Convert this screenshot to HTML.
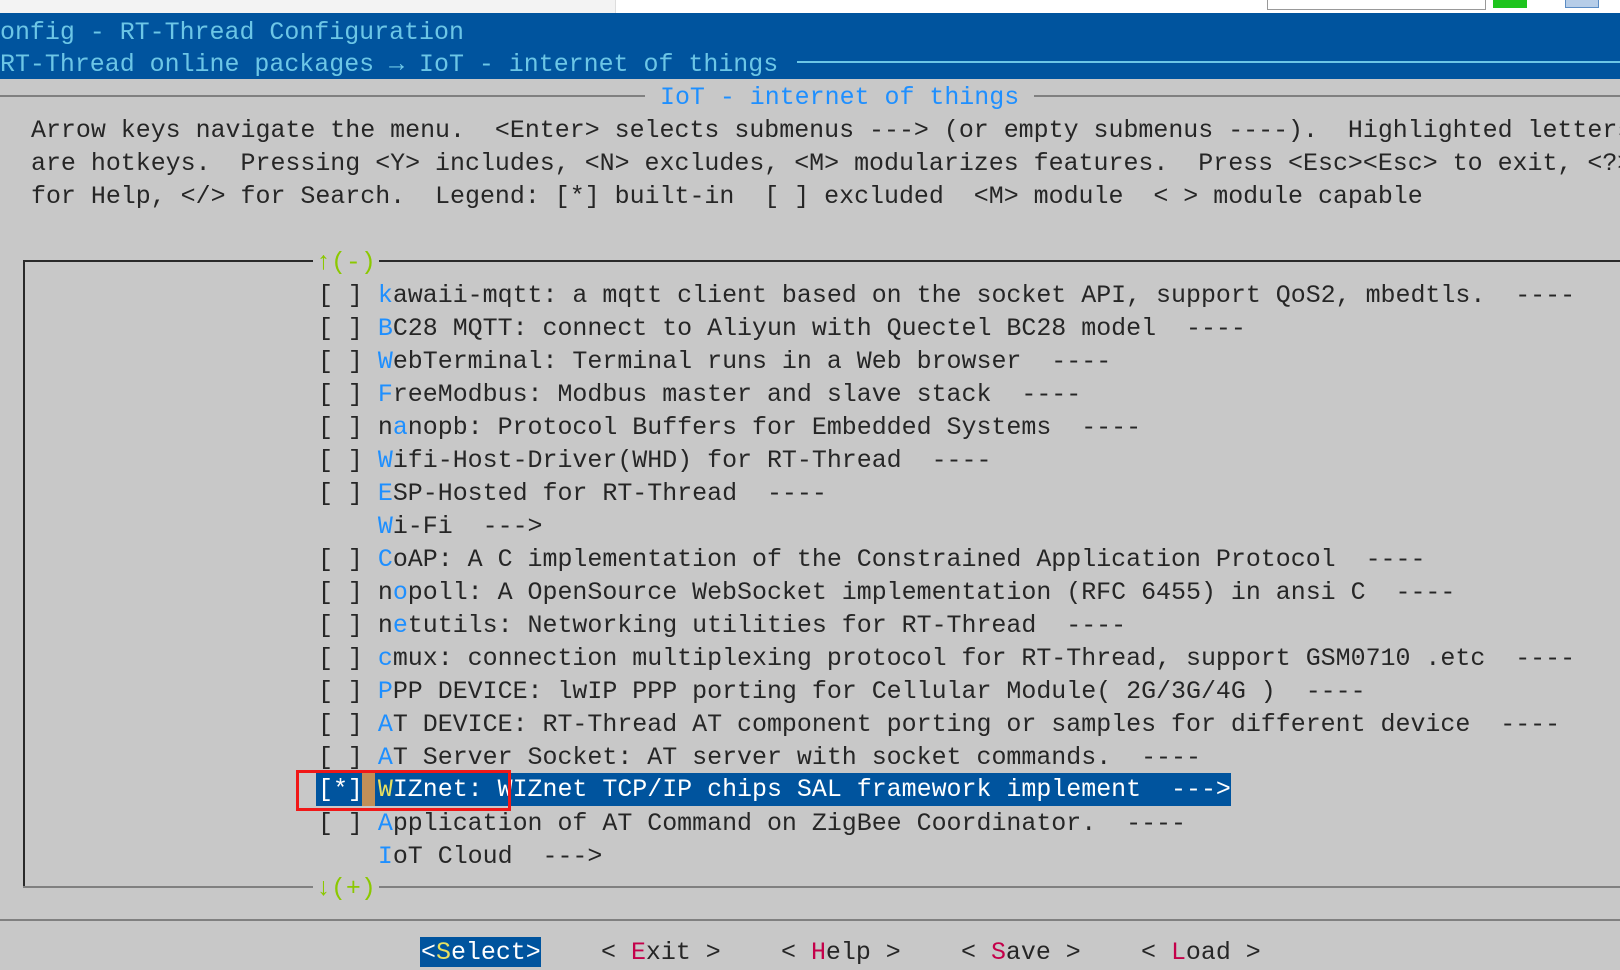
<!DOCTYPE html>
<html><head><meta charset="utf-8"><style>
*{margin:0;padding:0;box-sizing:border-box}
body{width:1620px;height:960px;overflow:hidden;background:#c8c8c8;position:relative;font-family:"Liberation Mono",monospace;font-size:24.95px;color:#262626}
.t{position:absolute;white-space:pre;line-height:33px;height:33px}
.b{color:#1e8fff}
.hdr{color:#6cc6e6}
.r{color:#c4004a}
</style></head><body>
<div style="position:absolute;left:0;top:0;width:1620px;height:13px;background:#fff"></div>
<div style="position:absolute;left:0;top:0;width:616px;height:13px;background:#f3f3f3;border-right:1px solid #ddd"></div>
<div style="position:absolute;left:1267px;top:0;width:219px;height:10px;background:#fff;border:1px solid #999;border-top:none"></div>
<div style="position:absolute;left:1493px;top:0;width:34px;height:8px;background:#1ec41e"></div>
<div style="position:absolute;left:1565px;top:0;width:34px;height:8px;background:#b6cde8;border:1px solid #5b8cc4;border-top:none"></div>
<div style="position:absolute;left:0;top:13px;width:1620px;height:66px;background:#00549e"></div>
<div class="t hdr" style="left:0;top:17px">onfig - RT-Thread Configuration</div>
<div class="t hdr" style="left:0;top:49px">RT-Thread online packages → IoT - internet of things</div>
<div style="position:absolute;left:797px;top:61px;width:823px;height:2px;background:#6cc6e6"></div>
<div style="position:absolute;left:0;top:95px;width:1620px;height:2px;background:#808080"></div>
<div class="t b" style="left:645px;top:82px;background:#c8c8c8;padding:0 15px">IoT - internet of things</div>
<div class="t" style="left:31px;top:115px">Arrow keys navigate the menu.  &lt;Enter&gt; selects submenus ---&gt; (or empty submenus ----).  Highlighted letters</div>
<div class="t" style="left:31px;top:148px">are hotkeys.  Pressing &lt;Y&gt; includes, &lt;N&gt; excludes, &lt;M&gt; modularizes features.  Press &lt;Esc&gt;&lt;Esc&gt; to exit, &lt;?&gt;</div>
<div class="t" style="left:31px;top:181px">for Help, &lt;/&gt; for Search.  Legend: [*] built-in  [ ] excluded  &lt;M&gt; module  &lt; &gt; module capable</div>
<div style="position:absolute;left:23px;top:260px;width:1597px;height:628px;border:2px solid #2a2a2a;border-right:none"></div>
<div style="position:absolute;left:23px;top:886px;width:1597px;height:2px;background:#808080"></div>
<div class="t" style="left:313px;top:247px;color:#8bc800;background:#c8c8c8;padding:0 3px">↑(-)</div>
<div class="t" style="left:313px;top:873px;color:#8bc800;background:#c8c8c8;padding:0 3px">↓(+)</div>
<div class="t" style="left:318px;top:280px">[ ] <span class="b">k</span>awaii-mqtt: a mqtt client based on the socket API, support QoS2, mbedtls.  ----</div>
<div class="t" style="left:318px;top:313px">[ ] <span class="b">B</span>C28 MQTT: connect to Aliyun with Quectel BC28 model  ----</div>
<div class="t" style="left:318px;top:346px">[ ] <span class="b">W</span>ebTerminal: Terminal runs in a Web browser  ----</div>
<div class="t" style="left:318px;top:379px">[ ] <span class="b">F</span>reeModbus: Modbus master and slave stack  ----</div>
<div class="t" style="left:318px;top:412px">[ ] n<span class="b">a</span>nopb: Protocol Buffers for Embedded Systems  ----</div>
<div class="t" style="left:318px;top:445px">[ ] <span class="b">W</span>ifi-Host-Driver(WHD) for RT-Thread  ----</div>
<div class="t" style="left:318px;top:478px">[ ] <span class="b">E</span>SP-Hosted for RT-Thread  ----</div>
<div class="t" style="left:318px;top:511px">    <span class="b">W</span>i-Fi  ---&gt;</div>
<div class="t" style="left:318px;top:544px">[ ] <span class="b">C</span>oAP: A C implementation of the Constrained Application Protocol  ----</div>
<div class="t" style="left:318px;top:577px">[ ] n<span class="b">o</span>poll: A OpenSource WebSocket implementation (RFC 6455) in ansi C  ----</div>
<div class="t" style="left:318px;top:610px">[ ] n<span class="b">e</span>tutils: Networking utilities for RT-Thread  ----</div>
<div class="t" style="left:318px;top:643px">[ ] <span class="b">c</span>mux: connection multiplexing protocol for RT-Thread, support GSM0710 .etc  ----</div>
<div class="t" style="left:318px;top:676px">[ ] <span class="b">P</span>PP DEVICE: lwIP PPP porting for Cellular Module( 2G/3G/4G )  ----</div>
<div class="t" style="left:318px;top:709px">[ ] <span class="b">A</span>T DEVICE: RT-Thread AT component porting or samples for different device  ----</div>
<div class="t" style="left:318px;top:742px">[ ] <span class="b">A</span>T Server Socket: AT server with socket commands.  ----</div>
<div style="position:absolute;left:316px;top:773px;width:915px;height:33px;background:#00549e"></div>
<div style="position:absolute;left:362px;top:773px;width:13px;height:33px;background:#c08f58"></div>
<div class="t" style="left:318px;top:774px;color:#fff">[*] <span style="color:#e8e060">W</span>IZnet: WIZnet TCP/IP chips SAL framework implement  ---&gt;</div>
<div style="position:absolute;left:296px;top:770px;width:215px;height:41px;border:3px solid #f01818"></div>
<div class="t" style="left:318px;top:808px">[ ] <span class="b">A</span>pplication of AT Command on ZigBee Coordinator.  ----</div>
<div class="t" style="left:318px;top:841px">    <span class="b">I</span>oT Cloud  ---&gt;</div>
<div style="position:absolute;left:0;top:919px;width:1620px;height:2px;background:#808080"></div>
<div style="position:absolute;left:420px;top:937px;width:121px;height:30px;background:#00549e"></div>
<div class="t" style="left:421px;top:937px;color:#fff">&lt;<span style="color:#e8e060">S</span>elect&gt;</div>
<div class="t" style="left:601px;top:937px">&lt; <span class="r">E</span>xit &gt;</div>
<div class="t" style="left:781px;top:937px">&lt; <span class="r">H</span>elp &gt;</div>
<div class="t" style="left:961px;top:937px">&lt; <span class="r">S</span>ave &gt;</div>
<div class="t" style="left:1141px;top:937px">&lt; <span class="r">L</span>oad &gt;</div>
</body></html>
